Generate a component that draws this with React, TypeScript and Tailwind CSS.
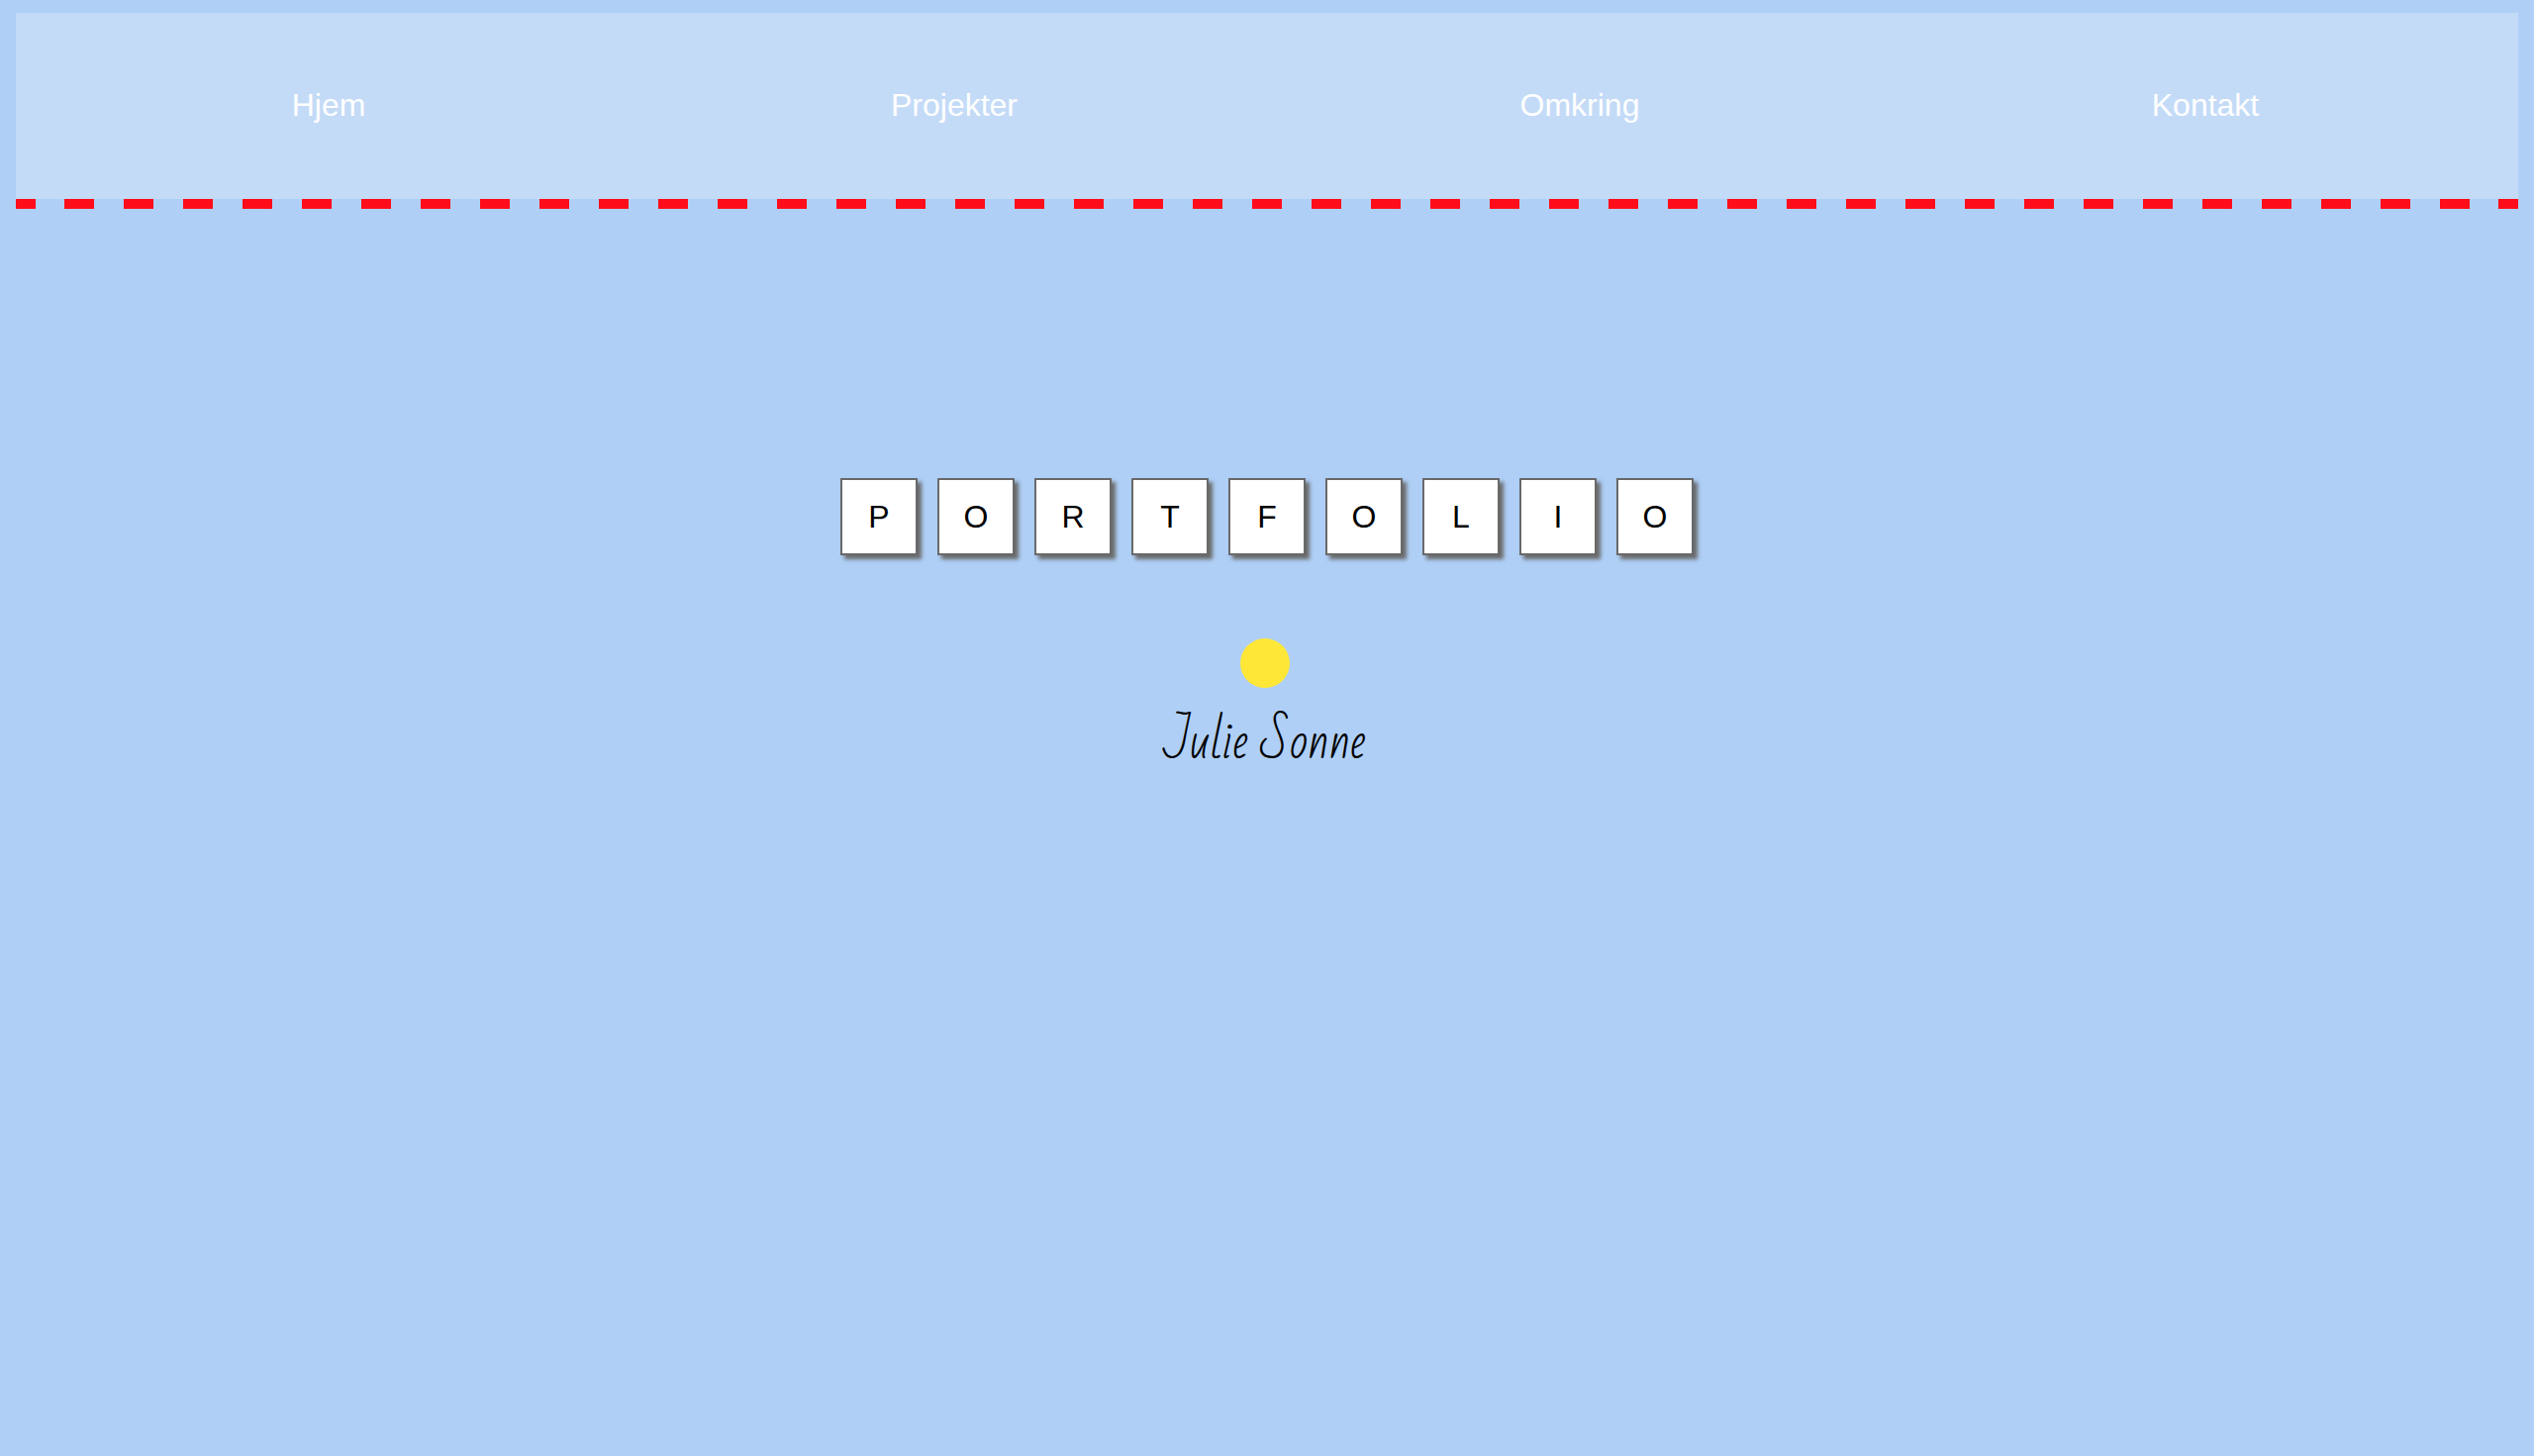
const links = [
  { label: "Hjem", href: "#hjem" },
  { label: "Projekter", href: "#projekter" },
  { label: "Omkring", href: "#omkring" },
  { label: "Kontakt", href: "#kontakt" },
];

const letters = "PORTFOLIO".split("");

function DashedRule() {
  return (
    <div className="flex h-2.5" aria-hidden="true">
      <span className="w-5 bg-[#ff0d1b]" />
      <span className="flex-1 bg-[repeating-linear-gradient(90deg,transparent_0_29px,#ff0d1b_29px_59px,transparent_59px_60px)]" />
      <span className="w-5 bg-[#ff0d1b]" />
    </div>
  );
}

export default function App() {
  return (
    <div className="min-h-screen bg-[#afcff6] px-4 pt-[13px] font-['Liberation_Sans',Arial,sans-serif] text-[32px] leading-9 text-black">
      <header>
        <nav className="bg-[#c4dbf7] pt-[75px] pb-[77px]">
          <ul className="grid grid-cols-4 text-center text-white">
            {links.map((link) => (
              <li key={link.label}>
                <a href={link.href}>{link.label}</a>
              </li>
            ))}
          </ul>
        </nav>
        <DashedRule />
      </header>
      <main className="flex flex-col items-center pt-[272px]">
        <h1 className="flex gap-5" aria-label="Portfolio">
          {letters.map((letter, i) => (
            <span
              key={i}
              className="flex size-[78px] items-center justify-center border-2 border-[#696969] bg-white shadow-[4px_4px_4px_#696969]"
            >
              {letter}
            </span>
          ))}
        </h1>
        <div className="mt-[84px] flex flex-col items-center pr-1">
          <span className="size-[50px] rounded-full bg-[#ffe737]" />
          <p className="mt-[23px] font-['Bad_Script','Lato',cursive] text-[48px] leading-[64px] whitespace-nowrap">
            Julie Sonne
          </p>
        </div>
      </main>
    </div>
  );
}
